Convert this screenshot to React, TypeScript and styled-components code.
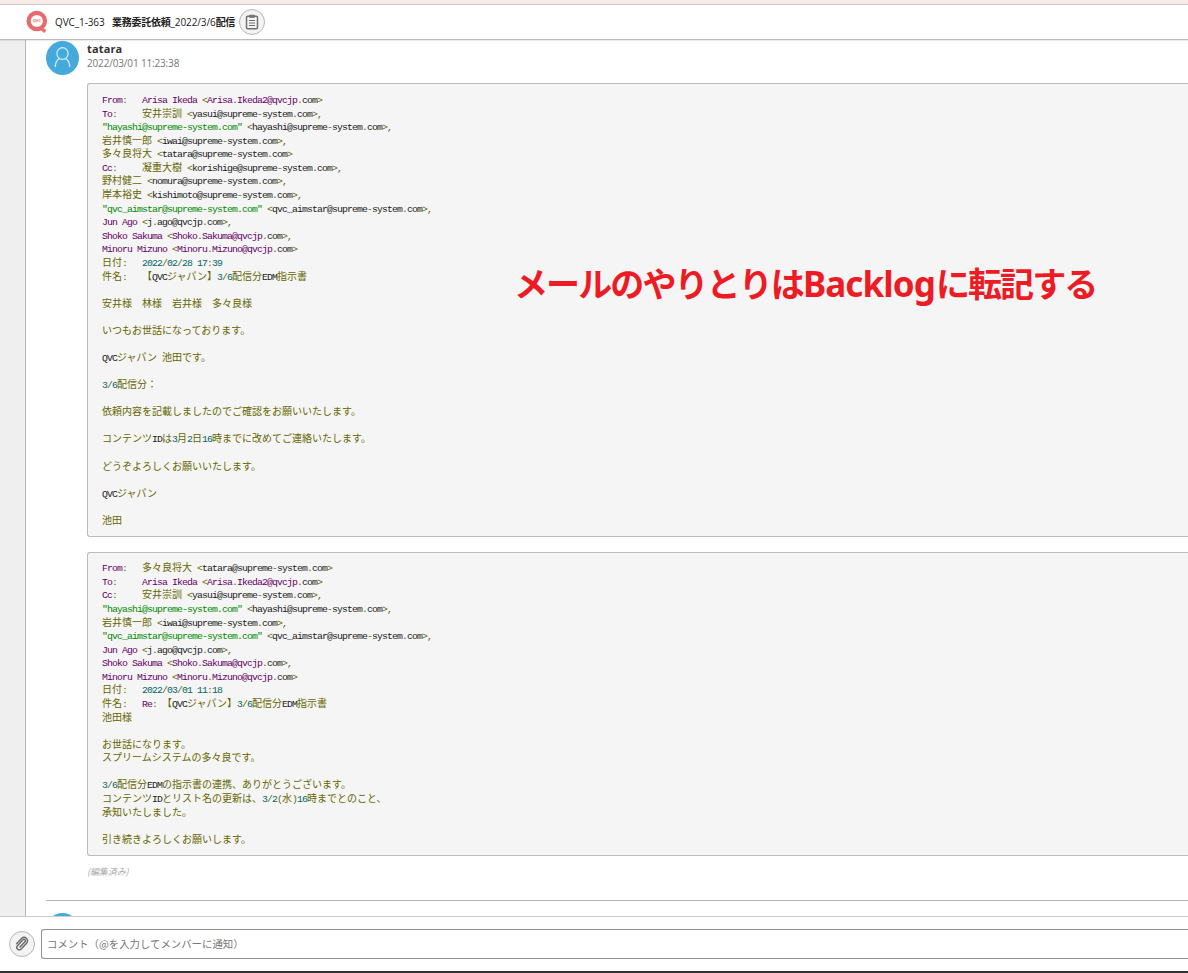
import React from 'react';
import styled, { createGlobalStyle } from 'styled-components';

const GlobalStyle = createGlobalStyle`
  * { box-sizing: border-box; }
  html, body { margin: 0; padding: 0; overflow: hidden; }
  body { font-family: "Open Sans", "Noto Sans CJK JP", sans-serif; background: #fff; }
`;

const Page = styled.div`
  width: 1188px;
  height: 973px;
  display: flex;
  flex-direction: column;
  overflow: hidden;
  background: #fff;
`;
const TopStripe = styled.div`
  flex: none;
  height: 5px;
  background: #f8eae8;
  border-bottom: 1px solid #cfcaca;
`;
const Header = styled.header`
  flex: none;
  height: 35px;
  display: flex;
  align-items: center;
  padding-left: 26px;
  border-bottom: 1px solid #bbb;
  box-shadow: 0 1px 1px rgba(0, 0, 0, 0.08);
  position: relative;
  z-index: 1;
`;
const Title = styled.h1`
  margin: 0 5px 0 7px;
  width: 179px;
  display: flex;
  align-items: baseline;
  font-size: 10px;
  font-weight: 400;
  line-height: 16px;
  letter-spacing: -0.1px;
  color: #222;
  white-space: pre;
`;
const IssueKey = styled.span`
  flex: none;
  width: 57px;
`;
const TitleCjk = styled.span`
  flex: none;
  font-family: "Noto Sans CJK JP", sans-serif;
  font-size: 10px;
  font-weight: 700;
  letter-spacing: -0.25px;
`;
const RoundButton = styled.button<{ $size: number }>`
  flex: none;
  width: ${p => p.$size}px;
  height: ${p => p.$size}px;
  padding: 0;
  display: flex;
  align-items: center;
  justify-content: center;
  border: 1px solid #b5b5b5;
  border-radius: 50%;
  background: #f3f3f3;
`;
const Main = styled.main`
  flex: 1;
  min-height: 0;
  display: flex;
`;
const Rail = styled.aside`
  flex: none;
  width: 26px;
  background: #efefef;
  border-right: 1px solid #b8b8b8;
`;
const Comments = styled.section`
  flex: 1;
  min-width: 0;
  padding-left: 20px;
  overflow: hidden;
`;
const Comment = styled.article<{ $divided?: boolean }>`
  display: flex;
  align-items: flex-start;
  height: ${p => (p.$divided ? '861px' : 'auto')};
  padding-top: ${p => (p.$divided ? 1 : 12)}px;
  border-bottom: ${p => (p.$divided ? '1px solid #b9b9b9' : 'none')};
`;
const Avatar = styled.div`
  flex: none;
  width: 33px;
  height: 34px;
  border-radius: 50%;
  background: #45a9dc;
  display: flex;
  justify-content: center;
`;
const CommentBody = styled.div`
  flex: 1;
  min-width: 0;
  margin-left: 8px;
  position: relative;
`;
const Author = styled.div`
  height: 15px;
  font-size: 11px;
  line-height: 15px;
  font-weight: 700;
  letter-spacing: 0.15px;
  color: #333;
`;
const Timestamp = styled.div`
  height: 14px;
  font-size: 10px;
  line-height: 14px;
  letter-spacing: -0.16px;
  color: #777;
`;
const Quote = styled.div<{ $first?: boolean; $height: number }>`
  margin-top: ${p => (p.$first ? 13 : 15)}px;
  height: ${p => p.$height}px;
  padding: ${p => (p.$first ? 8 : 7.2)}px 14px;
  background: #f5f5f5;
  border: 1px solid #bbb;
  border-right: 0;
  border-radius: 3px 0 0 3px;
`;
const Line = styled.div`
  height: 13.58px;
  line-height: 13.58px;
  font-family: "Noto Sans CJK JP", sans-serif;
  font-size: 10px;
  white-space: pre;
`;
const Token = styled.span<{ $color: string; $half: boolean }>`
  color: ${p => p.$color};
  line-height: 1;
  ${p => p.$half && 'font-family: "Liberation Mono", monospace; font-size: 9.8px; letter-spacing: -0.881px;'}
`;
const Edited = styled.div`
  margin-top: 8px;
  font-family: "Noto Sans CJK JP", sans-serif;
  font-size: 9px;
  line-height: 16px;
  font-style: italic;
  letter-spacing: -0.1px;
  color: #aaa;
`;
const Annotation = styled.div`
  position: absolute;
  left: 427px;
  top: 217px;
  display: flex;
  align-items: baseline;
  font-family: "Noto Sans CJK JP", sans-serif;
  font-size: 34px;
  line-height: 50px;
  font-weight: 700;
  letter-spacing: -1.9px;
  color: #ed1c24;
  white-space: pre;
`;
const AnnotationLatin = styled.span`
  width: 133px;
  font-family: "Noto Sans", sans-serif;
  font-size: 35px;
  letter-spacing: -0.9px;
`;
const Footer = styled.footer`
  flex: none;
  height: 57px;
  display: flex;
  align-items: center;
  gap: 6px;
  padding-left: 9px;
  border-top: 1px solid #ccc;
  border-bottom: 2px solid #333235;
  background: #fff;
`;
const Input = styled.div`
  flex: 1;
  height: 30px;
  padding-left: 5px;
  border: 1px solid #8f8f8f;
  border-right: 0;
  border-radius: 3px 0 0 3px;
  font-family: "Noto Sans CJK JP", sans-serif;
  font-size: 10.4px;
  line-height: 28px;
  color: #777;
`;

const LogoIcon = () => (
  <svg width="22" height="24" viewBox="0 0 22 24">
    <circle cx="10.8" cy="11" r="8.2" fill="#fff" stroke="#e76b6c" strokeWidth="4.2" />
    <path d="M12.8 17.300l3.400-1.300 1.200 3 2.600.8-1.600 3-2.800-2.200z" fill="#e76b6c" stroke="#e76b6c" strokeWidth="0.6" />
    <text x="10.8" y="12.3" textAnchor="middle" fontSize="4" fontWeight="700" fontFamily="Open Sans" fill="#e76b6c">QVC</text>
  </svg>
);
const ClipboardIcon = () => (
  <svg width="14" height="16" viewBox="0 0 14 16" fill="none" stroke="#707070">
    <rect x="1.5" y="2.2" width="11" height="12.6" rx="1.2" strokeWidth="1.5" />
    <rect x="4.3" y="1.2" width="5.4" height="2.2" rx="0.6" fill="#777" strokeWidth="0.8" />
    <path d="M4 6.500h6M4 9h6M4 11.500h6" strokeWidth="1" />
  </svg>
);
const PersonIcon = () => (
  <svg width="33" height="34" viewBox="0 0 33 34" fill="none" stroke="#d4effa" strokeWidth="1.2">
    <ellipse cx="16.5" cy="12.5" rx="5.6" ry="5.9" />
    <path d="M9.300 26c0-4.600 1.700-7.300 4.500-8.600M23.700 26c0-4.600-1.700-7.300-4.500-8.600" />
  </svg>
);
const ClipIcon = () => (
  <svg width="16" height="16" viewBox="0 0 24 24" fill="none" stroke="#666" strokeWidth="2.1" strokeLinecap="round">
    <path d="M9 16.500l7.500-8a2 2 0 0 0-3-2.800L5.300 14.500a3.700 3.700 0 0 0 5.400 5.100l8.500-9.200a5.200 5.200 0 0 0-7.600-7L4 11.500" />
  </svg>
);

const firstMail = `From:   Arisa Ikeda <Arisa.Ikeda2@qvcjp.com>
To:     安井崇訓 <yasui@supreme-system.com>,
"hayashi@supreme-system.com" <hayashi@supreme-system.com>,
岩井慎一郎 <iwai@supreme-system.com>,
多々良将大 <tatara@supreme-system.com>
Cc:     凝重大樹 <korishige@supreme-system.com>,
野村健二 <nomura@supreme-system.com>,
岸本裕史 <kishimoto@supreme-system.com>,
"qvc_aimstar@supreme-system.com" <qvc_aimstar@supreme-system.com>,
Jun Ago <j.ago@qvcjp.com>,
Shoko Sakuma <Shoko.Sakuma@qvcjp.com>,
Minoru Mizuno <Minoru.Mizuno@qvcjp.com>
日付:   2022/02/28 17:39
件名:   【QVCジャパン】3/6配信分EDM指示書

安井様　林様　岩井様　多々良様

いつもお世話になっております。

QVCジャパン 池田です。

3/6配信分：

依頼内容を記載しましたのでご確認をお願いいたします。

コンテンツIDは3月2日16時までに改めてご連絡いたします。

どうぞよろしくお願いいたします。

QVCジャパン

池田`;

const replyMail = `From:   多々良将大 <tatara@supreme-system.com>
To:     Arisa Ikeda <Arisa.Ikeda2@qvcjp.com>
Cc:     安井崇訓 <yasui@supreme-system.com>,
"hayashi@supreme-system.com" <hayashi@supreme-system.com>,
岩井慎一郎 <iwai@supreme-system.com>,
"qvc_aimstar@supreme-system.com" <qvc_aimstar@supreme-system.com>,
Jun Ago <j.ago@qvcjp.com>,
Shoko Sakuma <Shoko.Sakuma@qvcjp.com>,
Minoru Mizuno <Minoru.Mizuno@qvcjp.com>
日付:   2022/03/01 11:18
件名:   Re: 【QVCジャパン】3/6配信分EDM指示書
池田様

お世話になります。
スプリームシステムの多々良です。

3/6配信分EDMの指示書の連携、ありがとうございます。
コンテンツIDとリスト名の更新は、3/2(水)16時までとのこと、
承知いたしました。

引き続きよろしくお願いします。`;

const tokenPattern = /"[^"]*"|[A-Za-z_][A-Za-z0-9_@]*|\d+| +|[!-~]|[^ -~]+/g;

function tokenColor(token: string) {
  if (token[0] === '"') return '#008800';
  if (/^[A-Z][a-z]/.test(token)) return '#660066';
  if (/^[A-Za-z_]/.test(token)) return '#1a1a1a';
  if (/^\d/.test(token)) return '#006666';
  return '#666600';
}

const Mail = ({ text }: { text: string }) => (
  <>
    {text.split('\n').map((line, row) => (
      <Line key={row}>
        {(line.match(tokenPattern) ?? []).map((token, i) => (
          <Token key={i} $color={tokenColor(token)} $half={/^[ -~]/.test(token)}>{token}</Token>
        ))}
      </Line>
    ))}
  </>
);

export default function App() {
  return (
    <Page>
      <GlobalStyle />
      <TopStripe />
      <Header>
        <LogoIcon />
        <Title>
          <IssueKey>QVC_1-363</IssueKey>
          <TitleCjk>業務委託依頼</TitleCjk>
          <span>_2022/3/6</span>
          <TitleCjk>配信</TitleCjk>
        </Title>
        <RoundButton $size={26}><ClipboardIcon /></RoundButton>
      </Header>
      <Main>
        <Rail />
        <Comments>
          <Comment $divided>
            <Avatar><PersonIcon /></Avatar>
            <CommentBody>
              <Author>tatara</Author>
              <Timestamp>2022/03/01 11:23:38</Timestamp>
              <Quote $first $height={454}><Mail text={firstMail} /></Quote>
              <Quote $height={304}><Mail text={replyMail} /></Quote>
              <Edited>(編集済み)</Edited>
              <Annotation>
                メールのやりとりは<AnnotationLatin>Backlog</AnnotationLatin>に転記する
              </Annotation>
            </CommentBody>
          </Comment>
          <Comment>
            <Avatar />
          </Comment>
        </Comments>
      </Main>
      <Footer>
        <RoundButton $size={26}><ClipIcon /></RoundButton>
        <Input>コメント（@を入力してメンバーに通知）</Input>
      </Footer>
    </Page>
  );
}
